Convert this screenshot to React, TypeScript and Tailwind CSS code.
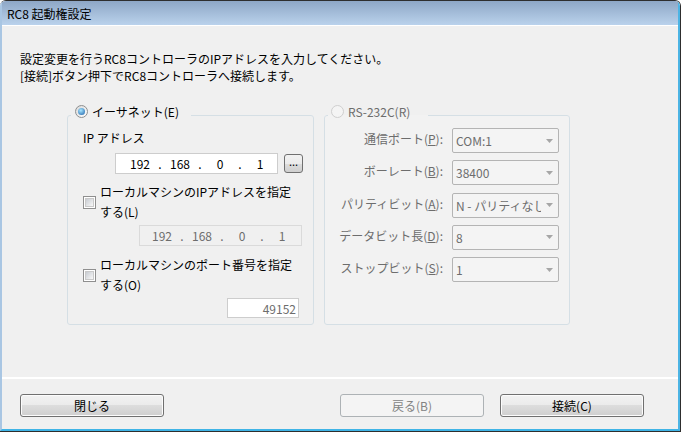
import React from 'react';

const font = "font-['Noto_Sans_CJK_JP','Noto_Sans',sans-serif]";

function Radio({ checked, disabled }: { checked?: boolean; disabled?: boolean }) {
  return (
    <span
      className={`flex h-[13px] w-[13px] shrink-0 items-center justify-center rounded-full border ${
        disabled
          ? 'border-[#cfcfcf] bg-[#f4f4f4]'
          : 'border-[#8e8f8f] bg-[linear-gradient(135deg,#d9d9d9,#ffffff)]'
      }`}
    >
      {checked && (
        <span className="h-[7px] w-[7px] rounded-full bg-[radial-gradient(circle_at_40%_35%,#a8e6ff,#1a5fa8)]" />
      )}
    </span>
  );
}

function Check() {
  return (
    <span className="flex h-[13px] w-[13px] shrink-0 items-center justify-center border border-[#8f8f8f] bg-white">
      <span className="h-[9px] w-[9px] border border-[#c9c9c9] bg-[linear-gradient(135deg,#c8ccd2,#f8f8f8)]" />
    </span>
  );
}

function IpField({ disabled }: { disabled?: boolean }) {
  const parts = ['192', '168', '0', '1'];
  return (
    <div
      className={`flex h-[21px] w-[163px] items-center border leading-[17px] ${
        disabled
          ? 'border-[#dadada] bg-[#f0f0f0] pl-[7px] text-[#6d6d6d]'
          : 'border-[#cdcdcd] bg-white pl-[9px] text-black'
      }`}
    >
      {parts.map((p, i) => (
        <React.Fragment key={i}>
          <span className="w-[30px] text-center">{p}</span>
          {i < 3 && <span className="w-[10px] text-center">.</span>}
        </React.Fragment>
      ))}
    </div>
  );
}

function Combo({ value }: { value: string }) {
  return (
    <div className="flex h-[25px] w-[107px] items-center rounded-[2px] border border-[#b4b4b4] bg-[#f4f4f4] pl-[3px] text-[#6d6d6d]">
      <span className="flex-1 overflow-hidden whitespace-nowrap leading-[17px]">{value}</span>
      <span className="flex w-[17px] shrink-0 items-center justify-center">
        <svg width="7" height="4" viewBox="0 0 7 4">
          <path d="M0 0h7L3.5 4z" fill="#a6a6a6" />
        </svg>
      </span>
    </div>
  );
}

function Button({ label, disabled }: { label: string; disabled?: boolean }) {
  return (
    <div
      className={`flex h-[23px] w-[144px] items-center justify-center rounded-[3px] border leading-[17px] ${
        disabled
          ? 'border-[#adb2b5] bg-[#f4f4f4] text-[#838383]'
          : 'border-[#707070] bg-[linear-gradient(to_bottom,#f2f2f2_0%,#ebebeb_50%,#dddddd_50%,#cfcfcf_100%)] text-black shadow-[inset_0_0_0_1px_#fcfcfc]'
      }`}
    >
      {label}
    </div>
  );
}

const rows: { label: React.ReactNode; value: string }[] = [
  { label: <>通信ポート(<u>P</u>):</>, value: 'COM:1' },
  { label: <>ボーレート(<u>B</u>):</>, value: '38400' },
  { label: <>パリティビット(<u>A</u>):</>, value: 'N - パリティなし' },
  { label: <>データビット長(<u>D</u>):</>, value: '8' },
  { label: <>ストップビット(<u>S</u>):</>, value: '1' },
];

export default function App() {
  return (
    <div className={`h-[432px] w-[681px] overflow-hidden rounded-t-[6px] border-t border-r border-b border-[#2e2e2e] text-[12px] ${font}`}>
      <div className="flex h-full flex-col border-r-2 border-b-2 border-l-2 border-r-[#4cb4e4] border-b-[#3fb4e6] border-l-[#a9c6e3] bg-[#f0f0f0]">
        {/* title bar */}
        <div className="flex h-[25px] shrink-0 items-center border-b border-white bg-[linear-gradient(to_bottom,#8ea7c6,#bad2ec)] pl-[5px] leading-[17px] text-black">
          RC8 起動権設定
        </div>

        {/* body */}
        <div className="flex-1 pt-[24px] pl-[18px] leading-[17px] text-black">
          <p>設定変更を行うRC8コントローラのIPアドレスを入力してください。</p>
          <p>[接続]ボタン押下でRC8コントローラへ接続します。</p>

          <div className="mt-[19px] ml-[47px] flex gap-[10px]">
            {/* Ethernet */}
            <fieldset className="w-[247px] rounded-[3px] border border-[#d5dfe5]">
              <legend className="ml-[3px] flex items-center gap-[4px] pr-[12px] pb-[7px] pl-[4px]">
                <Radio checked />
                <span>イーサネット(E)</span>
              </legend>
              <div className="flex flex-col pb-[6px] pl-[15px]">
                <div className="mt-[2px]">IP アドレス</div>
                <div className="mt-[7px] ml-[32px] flex items-center gap-[6px]">
                  <IpField />
                  <div className="flex h-[19px] w-[19px] items-center justify-center rounded-[3px] border border-[#707070] bg-[linear-gradient(to_bottom,#f2f2f2_0%,#ebebeb_50%,#dddddd_50%,#cfcfcf_100%)] pb-[4px] text-[11px] leading-none">
                    ...
                  </div>
                </div>
                <div className="mt-[8px] flex items-center gap-[4px] leading-[20px]">
                  <Check />
                  <span className="whitespace-nowrap">
                    ローカルマシンのIPアドレスを指定
                    <br />
                    する(L)
                  </span>
                </div>
                <div className="mt-[3px] ml-[56px]">
                  <IpField disabled />
                </div>
                <div className="mt-[9px] flex items-center gap-[4px] leading-[20px]">
                  <Check />
                  <span className="whitespace-nowrap">
                    ローカルマシンのポート番号を指定
                    <br />
                    する(O)
                  </span>
                </div>
                <div className="mt-[3px] ml-[144px] flex h-[20px] w-[72px] items-center justify-end border border-[#cdcdcd] bg-white pr-[2px] text-[#6d6d6d]">
                  49152
                </div>
              </div>
            </fieldset>

            {/* RS-232C */}
            <fieldset className="w-[246px] rounded-[3px] border border-[#d5dfe5] bg-[#f2f2f2]">
              <legend className="ml-[3px] flex items-center gap-[4px] pr-[18px] pb-[7px] pl-[3px] text-[#6d6d6d]">
                <Radio disabled />
                <span>RS-232C(R)</span>
              </legend>
              <div className="mt-[1px] grid grid-cols-[118px_107px] gap-x-[9px] gap-y-[7.25px]">
                {rows.map((r, i) => (
                  <React.Fragment key={i}>
                    <div className="flex items-center justify-end pb-[4px] whitespace-nowrap text-[#6d6d6d]">{r.label}</div>
                    <Combo value={r.value} />
                  </React.Fragment>
                ))}
              </div>
            </fieldset>
          </div>
        </div>

        {/* separator */}
        <div className="h-[2px] shrink-0 bg-white" />

        {/* footer */}
        <div className="flex h-[50px] shrink-0 items-start pt-[15px] pr-[34px] pl-[18px]">
          <Button label="閉じる" />
          <div className="ml-auto flex gap-[16px]">
            <Button label="戻る(B)" disabled />
            <Button label="接続(C)" />
          </div>
        </div>
      </div>
    </div>
  );
}
